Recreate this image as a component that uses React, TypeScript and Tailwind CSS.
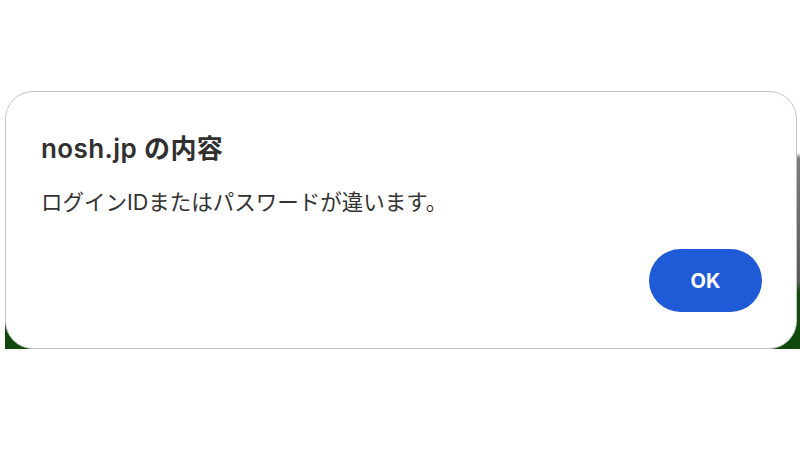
export default function App() {
  return (
    <div className="h-[450px] w-[800px] bg-white pt-[91px] pl-[5px]">
      {/* page behind the alert, only its edge shows */}
      <div className="h-[258px] w-[795px] bg-[linear-gradient(to_bottom,#ffffff_0%,#ffffff_24%,#7d7d7d_26%,#5a5a5a_74%,#0f4a0c_78%,#0f4a0c_100%)]">
        <div className="mr-[3px] flex h-full flex-col rounded-[28px] border border-[#c4c4c4] bg-white pl-[35px] pr-[34px]">
          <h1 className="mt-[39px] font-['Inter','Noto_Sans_CJK_JP',sans-serif] text-[26px] font-semibold leading-[36px] tracking-[0.4px] text-[#303030]">
            nosh.jp の内容
          </h1>
          <p className="mt-[20px] font-['Inter','Noto_Sans_CJK_JP',sans-serif] text-[21.5px] leading-[30px] text-[#333333]">
            ログインIDまたはパスワードが違います。
          </p>
          <div className="mt-auto mb-[36px] flex justify-end">
            <button className="h-[63px] w-[113px] rounded-full bg-[#1f5bd6] font-['Inter',sans-serif] text-[20px] font-bold text-white">
              OK
            </button>
          </div>
        </div>
      </div>
    </div>
  );
}
